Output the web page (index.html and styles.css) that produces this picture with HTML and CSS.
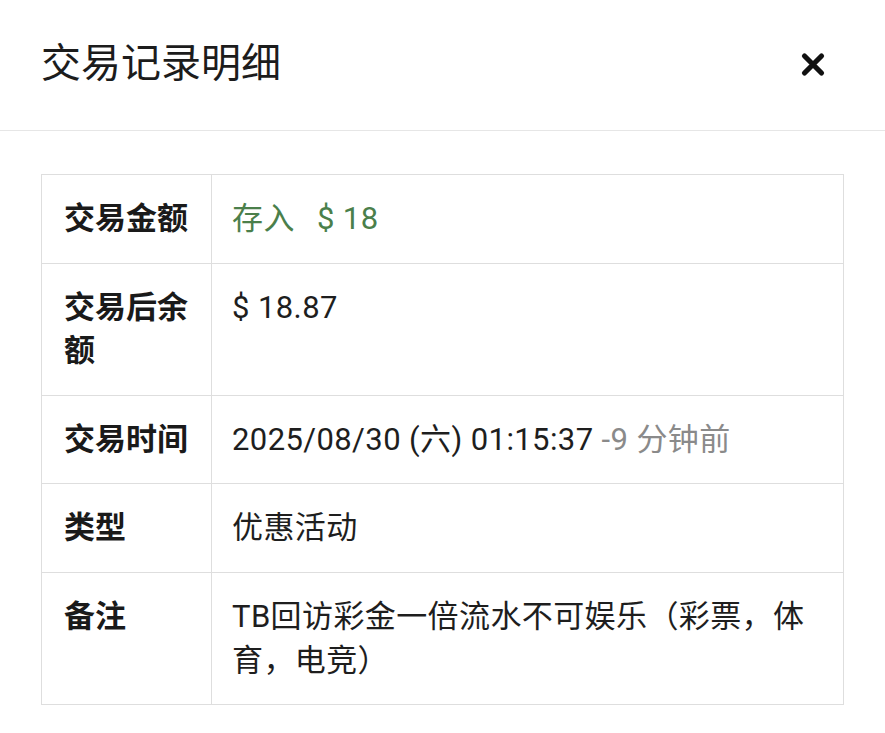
FILE: index.html
```html
<!DOCTYPE html>
<html lang="zh-CN">
<head>
    <meta charset="UTF-8">
    <meta name="viewport" content="width=device-width, initial-scale=1.0">
    <title>交易记录明细</title>
    <link rel="stylesheet" href="styles.css">
</head>
<body>
    <div class="dialog">
        <div class="dialog-header">
            <h1 class="dialog-title">交易记录明细</h1>
            <button class="close-btn" aria-label="关闭">
                <svg width="26" height="26" viewBox="0 0 26 26">
                    <path d="M4.5 4 L21.5 21 M21.5 4 L4.5 21" stroke="#111" stroke-width="5.2" stroke-linecap="round" fill="none"/>
                </svg>
            </button>
        </div>
        <div class="dialog-body">
            <table class="detail-table">
                <colgroup>
                    <col class="col-label">
                    <col>
                </colgroup>
                <tr>
                    <th>交易金额</th>
                    <td class="amount"><span class="amount-type">存入</span> $ 18</td>
                </tr>
                <tr>
                    <th>交易后余额</th>
                    <td>$ 18.87</td>
                </tr>
                <tr>
                    <th>交易时间</th>
                    <td>2025/08/30 (六) 01:15:37 <span class="ago">-9 分钟前</span></td>
                </tr>
                <tr>
                    <th>类型</th>
                    <td>优惠活动</td>
                </tr>
                <tr>
                    <th>备注</th>
                    <td>TB回访彩金一倍流水不可娱乐（彩票，体育，电竞）</td>
                </tr>
            </table>
        </div>
    </div>
</body>
</html>
```

FILE: styles.css
```css
* {
    margin: 0;
    padding: 0;
    box-sizing: border-box;
}
body {
    background: #fff;
    font-family: Roboto, "Noto Sans CJK SC", sans-serif;
    color: #222;
}
.dialog {
    width: 885px;
}
.dialog-header {
    display: flex;
    align-items: center;
    justify-content: space-between;
    height: 131px;
    padding: 0 59px 0 41px;
    border-bottom: 1px solid #e6e6e6;
}
.dialog-title {
    font-size: 40px;
    font-weight: 400;
    color: #1c1c1c;
    margin-bottom: 10px;
}
.close-btn {
    display: flex;
    background: none;
    border: none;
    cursor: pointer;
}
.dialog-body {
    padding: 43px 41px 0;
}
.detail-table {
    width: 100%;
    border-collapse: collapse;
    table-layout: fixed;
    font-size: 31px;
    line-height: 43.6px;
}
.col-label {
    width: 170px;
}
.detail-table th,
.detail-table td {
    border: 1px solid #dedede;
    padding: 22px 18px 22px 22px;
    text-align: left;
    vertical-align: top;
}
.detail-table th {
    font-weight: 700;
    color: #1a1a1a;
}
.detail-table td {
    padding-left: 20px;
    font-weight: 400;
    color: #1e1e1e;
    letter-spacing: 0.4px;
}
.detail-table td.amount {
    color: #4b7f4b;
}
.amount-type {
    margin-right: 14px;
}
.ago {
    color: #8a8a8a;
}
```
